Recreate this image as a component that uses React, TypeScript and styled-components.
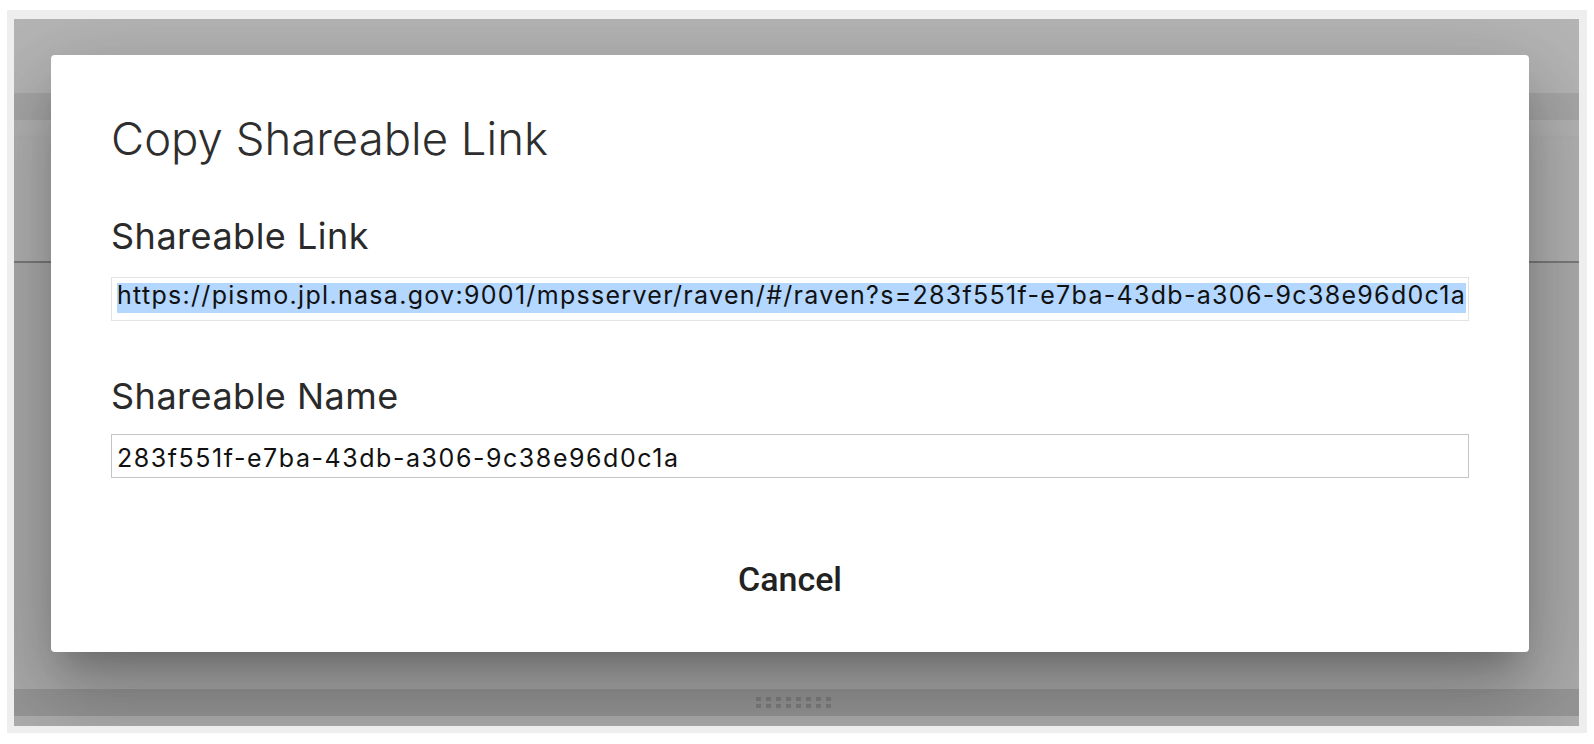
import React from "react";
import styled, { createGlobalStyle } from "styled-components";

const GlobalStyle = createGlobalStyle`
  html, body { margin: 0; padding: 0; background: #ffffff; }
  body { font-family: Roboto, "Liberation Sans", sans-serif; }
  *, *::before, *::after { box-sizing: border-box; }
`;

const Frame = styled.div`
  margin: 10px 0 0 7px;
  width: 1580px;
  height: 723px;
  background: #eeeeee;
  padding: 9px 8px 7px 7px;
`;

const Screen = styled.div`
  position: relative;
  width: 100%;
  height: 100%;
  overflow: hidden;
  display: flex;
  flex-direction: column;
  background: #f2f2f2;
`;

const Band = styled.div<{ $h: number; $bg: string }>`
  flex: none;
  height: ${(p) => p.$h}px;
  background: ${(p) => p.$bg};
`;

const Panel = styled.div`
  flex: none;
  height: 125px;
  background: #f9f9f9;
  border-bottom: 2px solid #aeaeae;
  box-shadow: 0 2px 5px rgba(0, 0, 0, 0.18);
`;

const Content = styled.div`
  flex: 1;
  background: #f1f1f1;
`;

const Footer = styled.div`
  flex: none;
  height: 27px;
  display: flex;
  align-items: center;
  justify-content: center;
  padding-right: 6px;
  background: #d4d4d4;
`;

const Handle = styled.div`
  display: grid;
  grid-template-columns: repeat(8, 5px);
  grid-auto-rows: 4px;
  column-gap: 5px;
  row-gap: 3px;
`;

const Dot = styled.span`
  background: #b4b4b4;
`;

const Backdrop = styled.div`
  position: absolute;
  inset: 0;
  z-index: 2;
  background: rgba(0, 0, 0, 0.29);
`;

const Dialog = styled.div`
  position: absolute;
  z-index: 3;
  left: 37px;
  top: 36px;
  width: 1478px;
  height: 597px;
  background: #ffffff;
  border-radius: 4px;
  padding: 58px 60px 0;
  display: flex;
  flex-direction: column;
  box-shadow: 0 22px 30px -14px rgba(0, 0, 0, 0.22),
    0 48px 76px 6px rgba(0, 0, 0, 0.15), 0 18px 92px 16px rgba(0, 0, 0, 0.12);
`;

const Title = styled.h1`
  margin: 0;
  font-family: Inter, Roboto, sans-serif;
  font-weight: 300;
  font-size: 45.5px;
  line-height: 52px;
  color: #2e2e2e;
`;

const Label = styled.div<{ $top: number }>`
  margin-top: ${(p) => p.$top}px;
  font-family: Inter, Roboto, sans-serif;
  font-weight: 400;
  font-size: 36px;
  letter-spacing: 0.5px;
  line-height: 42px;
  color: #2a2a2a;
`;

const TextBox = styled.div<{
  $top: number;
  $pad: number;
  $border: string;
  $spacing: number;
}>`
  margin-top: ${(p) => p.$top}px;
  height: 44px;
  display: flex;
  align-items: flex-start;
  padding: ${(p) => p.$pad}px 5px 0 5px;
  border: 1px solid ${(p) => p.$border};
  font-family: Inter, "Noto Sans", sans-serif;
  font-size: 25px;
  letter-spacing: ${(p) => p.$spacing}px;
  line-height: 30px;
  color: #111111;
  white-space: nowrap;
  overflow: hidden;
`;

const Selected = styled.span`
  display: inline-block;
  height: 30px;
  line-height: 24px;
  background: #b3d7ff;
`;

const Actions = styled.div`
  margin-top: 65px;
  display: flex;
  justify-content: center;
`;

const Button = styled.button`
  height: 72px;
  padding: 0 16px;
  border: none;
  background: transparent;
  font-family: Roboto, "Liberation Sans", sans-serif;
  font-weight: 500;
  font-size: 34px;
  line-height: 72px;
  color: #222222;
  cursor: pointer;
`;

const link =
  "https://pismo.jpl.nasa.gov:9001/mpsserver/raven/#/raven?s=283f551f-e7ba-43db-a306-9c38e96d0c1a";
const name = "283f551f-e7ba-43db-a306-9c38e96d0c1a";

export default function App() {
  return (
    <>
      <GlobalStyle />
      <Frame>
        <Screen>
          <Band $h={74} $bg="#ffffff" />
          <Band $h={27} $bg="#ebebeb" />
          <Band $h={18} $bg="#fcfcfc" />
          <Panel />
          <Content />
          <Footer>
            <Handle>
              {Array.from({ length: 16 }).map((_, i) => (
                <Dot key={i} />
              ))}
            </Handle>
          </Footer>
          <Band $h={10} $bg="#f6f6f6" />
          <Backdrop />
          <Dialog>
            <Title>Copy Shareable Link</Title>
            <Label $top={50}>Shareable Link</Label>
            <TextBox $top={20} $pad={5} $border="#e3e3e3" $spacing={1.3}>
              <Selected>{link}</Selected>
            </TextBox>
            <Label $top={54}>Shareable Name</Label>
            <TextBox $top={17} $pad={8} $border="#c4c4c4" $spacing={1.55}>
              <span>{name}</span>
            </TextBox>
            <Actions>
              <Button type="button">Cancel</Button>
            </Actions>
          </Dialog>
        </Screen>
      </Frame>
    </>
  );
}
